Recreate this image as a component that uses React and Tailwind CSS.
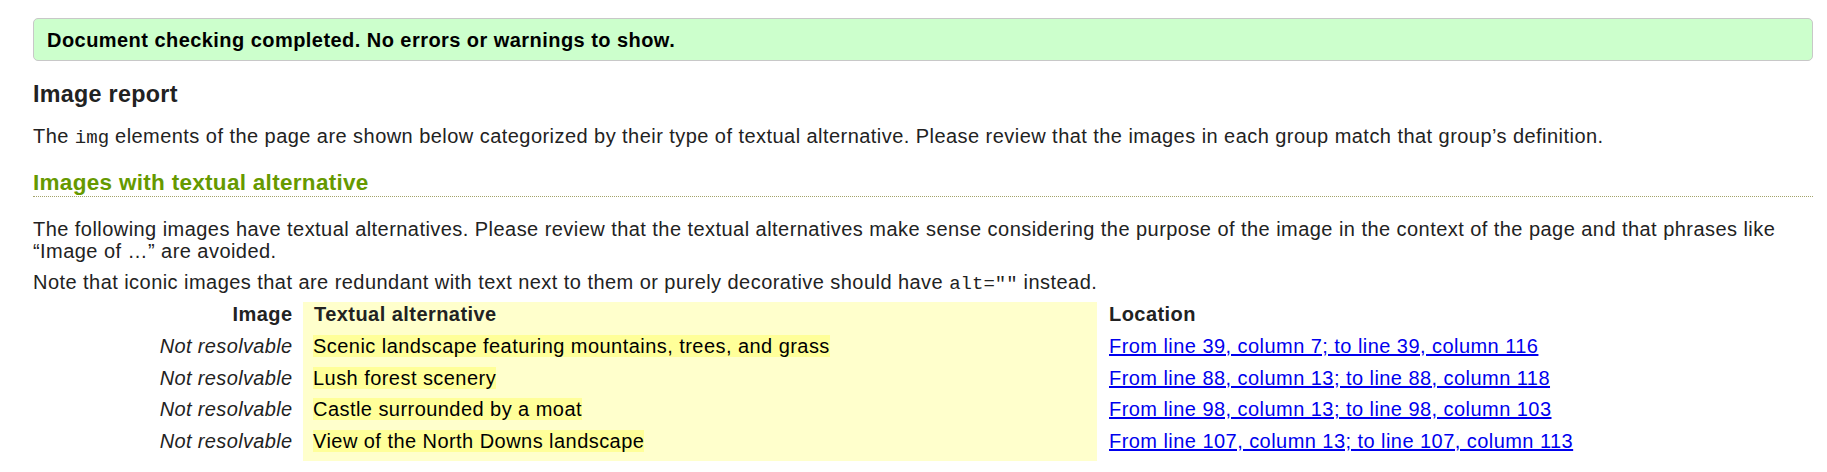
export default function App() {
  const rows = [
    ["Scenic landscape featuring mountains, trees, and grass", "From line 39, column 7; to line 39, column 116"],
    ["Lush forest scenery", "From line 88, column 13; to line 88, column 118"],
    ["Castle surrounded by a moat", "From line 98, column 13; to line 98, column 103"],
    ["View of the North Downs landscape", "From line 107, column 13; to line 107, column 113"],
  ];
  return (
    <div className="min-h-screen bg-white pl-[33px] pr-[14px] pt-[18px] font-['Liberation_Sans',Arial,sans-serif] text-[20px] leading-[22px] tracking-[0.45px] text-[#222]">
      <div className="rounded-[5px] border border-[#c8c8c8] bg-[#ccffcc] pl-[13px] pt-[10px] pb-[9px] font-bold text-black">
        Document checking completed. No errors or warnings to show.
      </div>
      <h2 className="mt-[20px] text-[23.3px] leading-[26px] tracking-[0.3px] font-bold text-[#222]">Image report</h2>
      <p className="mt-[18px]">
        The <code className="font-['Liberation_Mono','DejaVu_Sans_Mono',monospace] text-[19px] tracking-normal">img</code> elements of the page are shown below categorized by their type of textual alternative. Please review that the images in each group match that group’s definition.
      </p>
      <h3 className="mt-[21px] border-b border-dotted border-[#a3a36b] text-[22.5px] leading-[26px] tracking-[0.3px] font-bold text-[#669900]">
        Images with textual alternative
      </h3>
      <p className="mt-[20.5px]">
        The following images have textual alternatives. Please review that the textual alternatives make sense considering the purpose of the image in the context of the page and that phrases like “Image of …” are avoided.
      </p>
      <p className="mt-[9px]">
        Note that iconic images that are redundant with text next to them or purely decorative should have{" "}
        <code className="font-['Liberation_Mono','DejaVu_Sans_Mono',monospace] text-[19px] tracking-normal">alt=""</code> instead.
      </p>
      <table className="mt-[7.5px] border-collapse">
        <thead>
          <tr>
            <th className="w-[270px] pr-[10.5px] pt-[1px] pb-[8.75px] text-right font-bold">Image</th>
            <th className="w-[794px] bg-[#ffffcc] pl-[11px] pt-[1px] pb-[8.75px] text-left font-bold">Textual alternative</th>
            <th className="pl-[12px] pt-[1px] pb-[8.75px] text-left font-bold">Location</th>
          </tr>
        </thead>
        <tbody>
          {rows.map(([alt, loc]) => (
            <tr key={loc}>
              <td className="pr-[10.5px] pt-[1px] pb-[8.75px] text-right italic tracking-[0.35px]">Not resolvable</td>
              <td className="bg-[#ffffcc] pl-[10px] pt-[1px] pb-[8.75px] text-black">
                <span className="bg-[#ffff99]">{alt}</span>
              </td>
              <td className="pl-[12px] pt-[1px] pb-[8.75px]">
                <a href="#" className="text-[#0000ee] underline">{loc}</a>
              </td>
            </tr>
          ))}
        </tbody>
      </table>
    </div>
  );
}
